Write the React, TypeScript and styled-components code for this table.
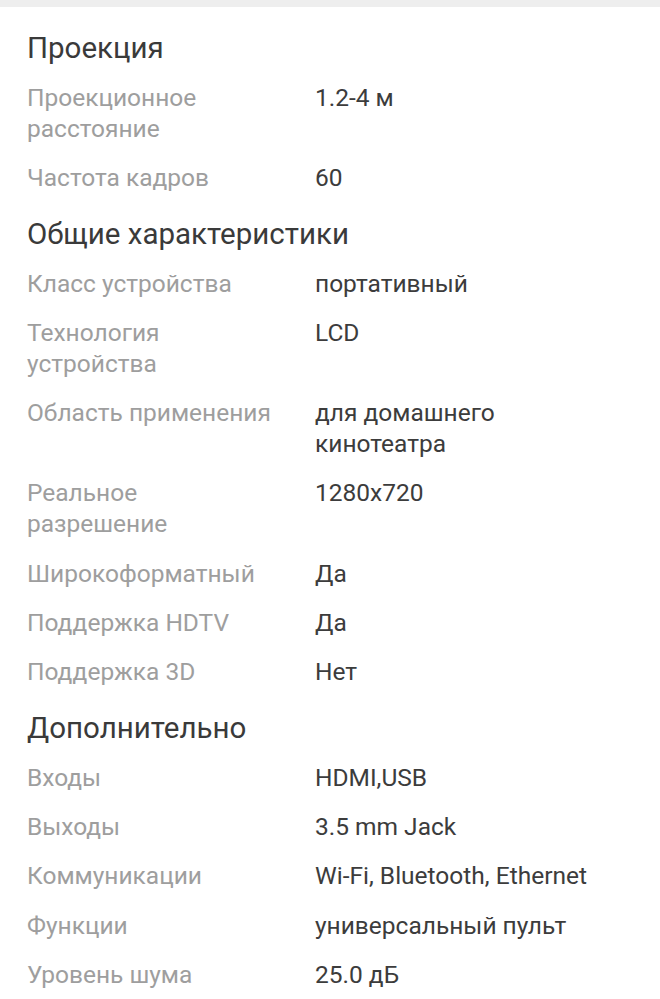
import styled, { createGlobalStyle } from "styled-components";

const GlobalStyle = createGlobalStyle`
  body {
    margin: 0;
    background: #ffffff;
    font-family: Roboto, "Noto Sans", sans-serif;
  }
`;

const Page = styled.div`
  width: 660px;
  min-height: 999px;
  background: #ffffff;
`;

const TopBar = styled.div`
  height: 7px;
  background: #eeeeee;
`;

const Content = styled.div`
  padding: 9px 40px 0 27px;
`;

const Section = styled.section`
  display: flex;
  flex-direction: column;
`;

const SectionTitle = styled.h2`
  margin: 13.5px 0 7px;
  font-size: 29.5px;
  font-weight: 400;
  line-height: 36px;
  color: #3a3a3a;
`;

const Row = styled.div`
  display: grid;
  grid-template-columns: 288px 1fr;
  padding: 9.13px 0;
  font-size: 24.5px;
  line-height: 31px;
`;

const Label = styled.span`
  color: #9e9e9e;
  padding-right: 40px;
`;

const Value = styled.span`
  color: #3c3c3c;
`;

type Spec = { label: string; value: string };

const sections: { title: string; specs: Spec[] }[] = [
  {
    title: "Проекция",
    specs: [
      { label: "Проекционное расстояние", value: "1.2-4 м" },
      { label: "Частота кадров", value: "60" },
    ],
  },
  {
    title: "Общие характеристики",
    specs: [
      { label: "Класс устройства", value: "портативный" },
      { label: "Технология устройства", value: "LCD" },
      { label: "Область применения", value: "для домашнего кинотеатра" },
      { label: "Реальное разрешение", value: "1280x720" },
      { label: "Широкоформатный", value: "Да" },
      { label: "Поддержка HDTV", value: "Да" },
      { label: "Поддержка 3D", value: "Нет" },
    ],
  },
  {
    title: "Дополнительно",
    specs: [
      { label: "Входы", value: "HDMI,USB" },
      { label: "Выходы", value: "3.5 mm Jack" },
      { label: "Коммуникации", value: "Wi-Fi, Bluetooth, Ethernet" },
      { label: "Функции", value: "универсальный пульт" },
      { label: "Уровень шума", value: "25.0 дБ" },
    ],
  },
];

const App = () => {
  return (
    <Page>
      <GlobalStyle />
      <TopBar />
      <Content>
        {sections.map((section) => (
          <Section key={section.title}>
            <SectionTitle>{section.title}</SectionTitle>
            {section.specs.map((spec) => (
              <Row key={spec.label}>
                <Label>{spec.label}</Label>
                <Value>{spec.value}</Value>
              </Row>
            ))}
          </Section>
        ))}
      </Content>
    </Page>
  );
};

export default App;
